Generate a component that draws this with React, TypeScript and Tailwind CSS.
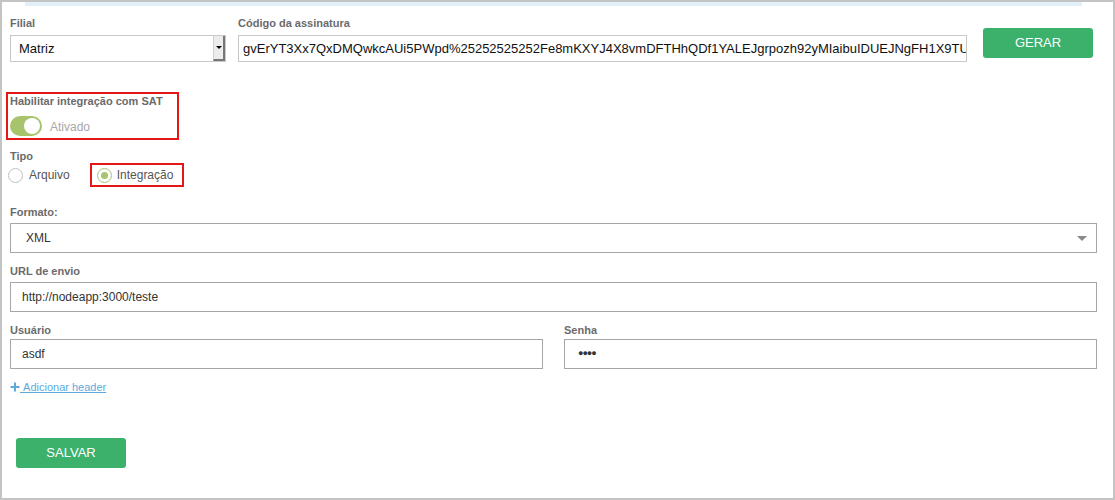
import React from 'react';

const GREEN = 'bg-[#3cb16c]';

function Label({ children, className = '' }: { children: React.ReactNode; className?: string }) {
  return (
    <div className={`text-[11px] leading-[13px] font-bold text-[#6b6b6b] ${className}`}>{children}</div>
  );
}

export default function App() {
  return (
    <div
      className="w-[1115px] h-[500px] border-2 border-[#c4c4c4] bg-white flex flex-col overflow-hidden"
      style={{ fontFamily: '"Liberation Sans", Arial, sans-serif' }}
    >
      {/* top strip */}
      <div className="ml-[23px] w-[1057px] h-[4px] bg-[#e2f1f8] shrink-0" />

      <div className="flex flex-col pl-[8px] pr-[16px]">
        {/* Row 1 */}
        <div className="flex items-start mt-[11px]">
          <div className="w-[216px] flex flex-col">
            <Label className="mb-[5px]">Filial</Label>
            <div className="h-[27px] border border-[#c8c8c8] flex items-center justify-between">
              <span className="pl-[8px] text-[13px] text-[#111]">Matriz</span>
              <div className="h-full w-[12px] bg-[#ececec] border-l border-[#d0d0d0] border-r-2 border-r-[#777] border-b-2 border-b-[#777] flex items-center justify-center">
                <div className="w-0 h-0 border-l-[3px] border-r-[3px] border-t-[3px] border-l-transparent border-r-transparent border-t-black" />
              </div>
            </div>
          </div>
          <div className="w-[729px] ml-[12px] flex flex-col">
            <Label className="mb-[5px]">Código da assinatura</Label>
            <div className="h-[27px] border border-[#c8c8c8] flex items-center overflow-hidden">
              <span className="pl-[4px] text-[13px] text-[#111] whitespace-nowrap">
                gvErYT3Xx7QxDMQwkcAUi5PWpd%25252525252Fe8mKXYJ4X8vmDFTHhQDf1YALEJgrpozh92yMIaibuIDUEJNgFH1X9TU
              </span>
            </div>
          </div>
          <button className={`ml-[16px] mt-[11px] w-[110px] h-[30px] rounded-[3px] ${GREEN} text-white text-[13px]`}>
            GERAR
          </button>
        </div>

        {/* SAT toggle */}
        <div className="mt-[30px] -ml-[4px] w-[173px] h-[48px] border-2 border-[#e51616] pl-[2px] pt-[1px]">
          <Label>Habilitar integração com SAT</Label>
          <div className="flex items-center mt-[8px]">
            <div className="w-[32px] h-[20px] rounded-full bg-[#a7c46c] flex items-center justify-end pr-[2px]">
              <div className="w-[16px] h-[16px] rounded-full bg-white" />
            </div>
            <span className="ml-[8px] mt-[2px] text-[12px] text-[#a8a8a8]">Ativado</span>
          </div>
        </div>

        {/* Tipo */}
        <Label className="mt-[10px]">Tipo</Label>
        <div className="flex items-center -ml-[2px] mt-0">
          <div className="flex items-center h-[24px]">
            <div className="w-[15px] h-[15px] rounded-full border border-[#c0c0c0]" />
            <span className="ml-[6px] text-[12px] text-[#555]">Arquivo</span>
          </div>
          <div className="ml-[20px] w-[94px] h-[24px] border-2 border-[#e51616] flex items-center pl-[5px]">
            <div className="w-[15px] h-[15px] rounded-full border border-[#a7c46c] flex items-center justify-center">
              <div className="w-[7px] h-[7px] rounded-full bg-[#a7c46c]" />
            </div>
            <span className="ml-[5px] text-[12px] text-[#555]">Integração</span>
          </div>
        </div>

        {/* Formato */}
        <Label className="mt-[19px] mb-[4px]">Formato:</Label>
        <div className="h-[30px] border border-[#a6a6a6] flex items-center justify-between">
          <span className="pl-[15px] text-[12px] text-[#333]">XML</span>
          <div className="mr-[9px] w-0 h-0 border-l-[5px] border-r-[5px] border-t-[5px] border-l-transparent border-r-transparent border-t-[#8a8a8a]" />
        </div>

        {/* URL */}
        <Label className="mt-[12px] mb-[4px]">URL de envio</Label>
        <div className="h-[30px] border border-[#a6a6a6] flex items-center">
          <span className="pl-[11px] text-[12px] text-[#333]">http://nodeapp:3000/teste</span>
        </div>

        {/* Usuário / Senha */}
        <div className="flex mt-[12px]">
          <div className="w-[533px] flex flex-col">
            <Label className="mb-[2px]">Usuário</Label>
            <div className="h-[30px] border border-[#a6a6a6] flex items-center">
              <span className="pl-[11px] text-[12px] text-[#333]">asdf</span>
            </div>
          </div>
          <div className="ml-[21px] flex-1 flex flex-col">
            <Label className="mb-[2px]">Senha</Label>
            <div className="h-[30px] border border-[#a6a6a6] flex items-center">
              <span className="pl-[13px] text-[9px] text-[#333] tracking-[-1px]">●●●●</span>
            </div>
          </div>
        </div>

        {/* Adicionar header */}
        <div className="mt-[10px] flex items-center text-[11px] text-[#5ea9dd]">
          <svg width="10" height="10" viewBox="0 0 10 10">
            <path d="M5 0.5v9M0.5 5h9" stroke="#5ea9dd" strokeWidth="2" />
          </svg>
          <span className="underline">&nbsp;Adicionar header</span>
        </div>

        <button className={`mt-[42px] ml-[6px] w-[110px] h-[30px] rounded-[3px] ${GREEN} text-white text-[13px]`}>
          SALVAR
        </button>
      </div>
    </div>
  );
}
